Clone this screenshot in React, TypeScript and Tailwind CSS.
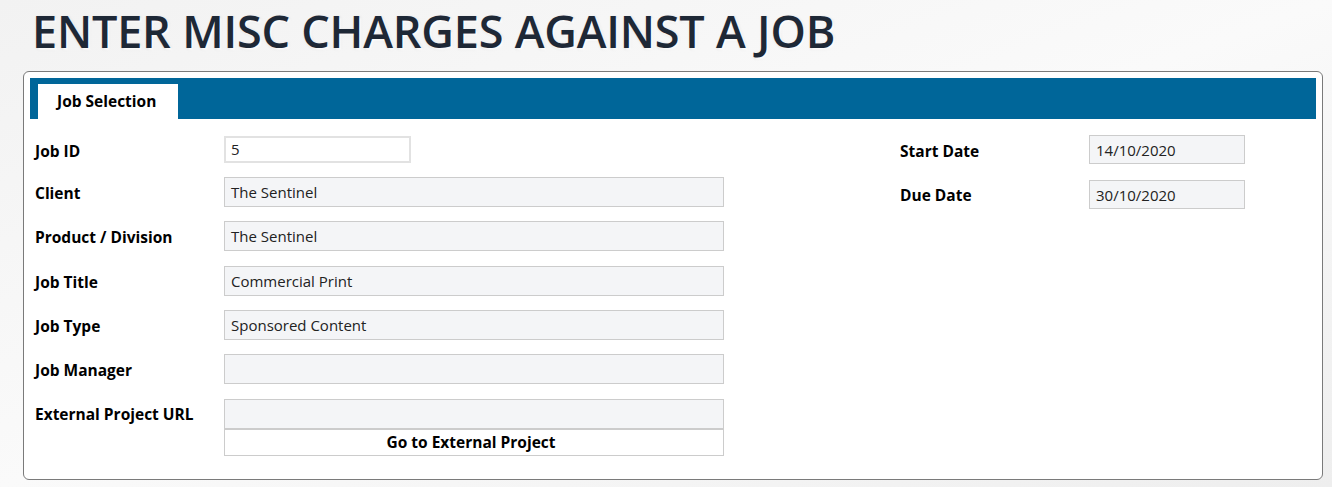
import React from "react";

const font = { fontFamily: '"Open Sans", "Noto Sans", sans-serif' };

const Field = ({ value = "" }: { value?: string }) => (
  <div className="h-[30px] w-[500px] border border-[#cccccc] bg-[#f4f5f7] px-[6px] text-[15px] leading-[28px] text-[#222]">
    {value}
  </div>
);

const Row = ({
  label,
  children,
  className = "",
  labelPad = "pt-[6px]",
}: {
  label: string;
  children: React.ReactNode;
  className?: string;
  labelPad?: string;
}) => (
  <div className={`flex items-start ${className}`}>
    <div className={`w-[189px] text-[15.5px] font-bold leading-[21px] text-black ${labelPad}`}>{label}</div>
    {children}
  </div>
);

export default function App() {
  const rows = [
    { label: "Client", value: "The Sentinel", gap: "mt-[14px]" },
    { label: "Product / Division", value: "The Sentinel", gap: "mt-[14px]" },
    { label: "Job Title", value: "Commercial Print", gap: "mt-[15px]" },
    { label: "Job Type", value: "Sponsored Content", gap: "mt-[14px]" },
    { label: "Job Manager", value: "", gap: "mt-[14px]" },
  ];

  return (
    <div
      className="h-[487px] w-[1332px] overflow-hidden bg-gradient-to-br from-[#f2f2f2] via-[#fafafa] to-[#eeeeee]"
      style={font}
    >
      <h1 className="h-[71px] whitespace-nowrap pl-[32px] pt-[2px] text-[45px] font-semibold leading-[58px] tracking-[-0.2px] text-[#1e2836] [text-shadow:2px_2px_2px_rgba(255,255,255,0.9),1px_1px_3px_rgba(0,0,0,0.15)]">
        ENTER MISC CHARGES AGAINST A JOB
      </h1>

      <div className="ml-[23px] h-[409px] w-[1300px] rounded-[6px] border border-[#7a7a7a] bg-white p-[6px]">
        {/* tab strip */}
        <div className="flex h-[41px] items-end bg-[#006699] pl-[8px]">
          <div className="flex h-[35px] w-[140px] items-center bg-white pl-[19px] text-[15.5px] font-bold text-black">
            Job Selection
          </div>
        </div>

        <div className="flex pl-[5px] pt-[17px]">
          {/* left column */}
          <div className="flex w-[865px] flex-col">
            <Row label="Job ID" labelPad="pt-[5px]">
              <div className="h-[27px] w-[187px] border-2 border-[#e2e2e2] bg-white px-[5px] text-[15px] leading-[23px] text-[#222]">
                5
              </div>
            </Row>
            {rows.map((r) => (
              <Row key={r.label} label={r.label} className={r.gap}>
                <Field value={r.value} />
              </Row>
            ))}
            <Row label="External Project URL" className="mt-[15px]" labelPad="pt-[5px]">
              <div className="flex flex-col">
                <Field />
                <button className="h-[27px] w-[500px] border border-[#cccccc] bg-white pr-[6px] text-[15.5px] font-bold text-black">
                  Go to External Project
                </button>
              </div>
            </Row>
          </div>

          {/* right column */}
          <div className="flex flex-col gap-[16px]">
            <div className="flex items-start">
              <div className="w-[189px] pt-[5px] text-[15.5px] font-bold leading-[21px] text-black">Start Date</div>
              <div className="-mt-[1px] h-[29px] w-[156px] border border-[#cccccc] bg-[#f4f5f7] px-[6px] text-[15px] leading-[29px] text-[#222]">
                14/10/2020
              </div>
            </div>
            <div className="flex items-start">
              <div className="w-[189px] pt-[5px] text-[15.5px] font-bold leading-[21px] text-black">Due Date</div>
              <div className="h-[29px] w-[156px] border border-[#cccccc] bg-[#f4f5f7] px-[6px] text-[15px] leading-[29px] text-[#222]">
                30/10/2020
              </div>
            </div>
          </div>
        </div>
      </div>
    </div>
  );
}
